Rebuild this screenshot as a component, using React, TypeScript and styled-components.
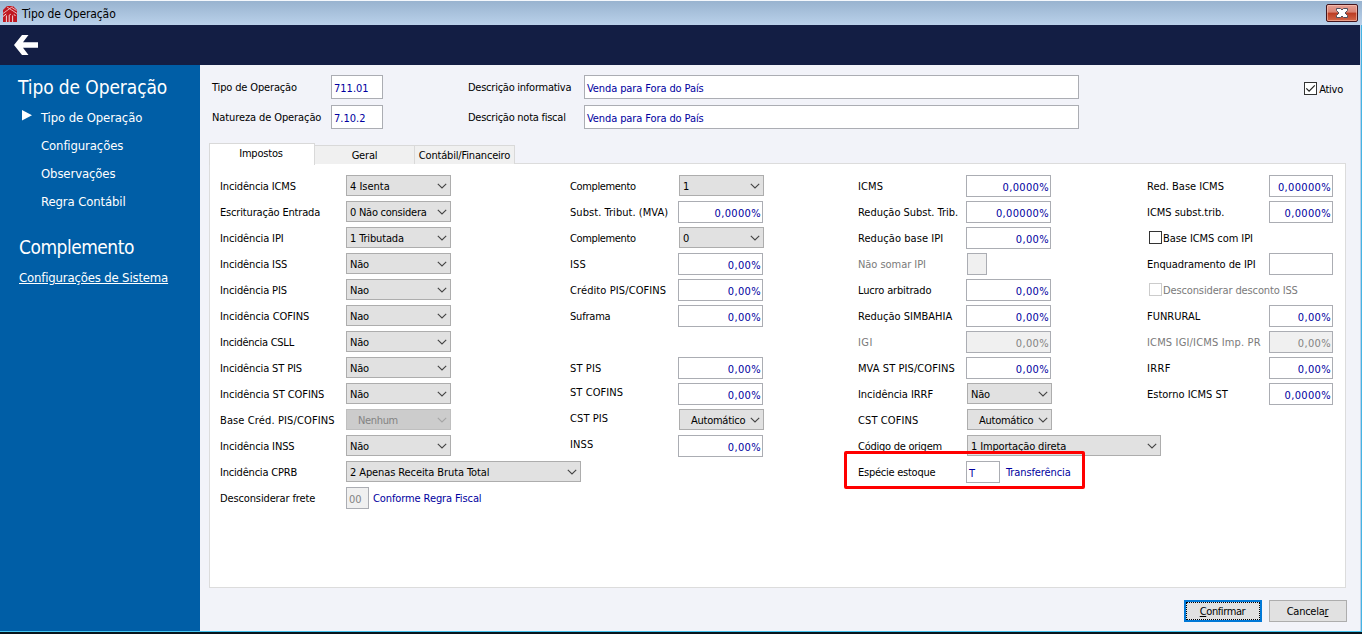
import React from 'react';
import styled, { createGlobalStyle, css } from 'styled-components';

type FieldType = {
  label?: string;
  ls?: number;
  kind?: 'select' | 'input' | 'check' | 'empty';
  value?: string;
  vls?: number;
  width?: number;
  disabled?: boolean;
  labelDisabled?: boolean;
  left?: boolean;
  indent?: number;
  up?: number;
  note?: string;
  mark?: boolean;
};

const column1: FieldType[] = [
  { label: 'Incidência ICMS', kind: 'select', value: '4 Isenta', ls: -0.15, vls: 0 },
  { label: 'Escrituração Entrada', kind: 'select', value: '0 Não considera', ls: -0.17 },
  { label: 'Incidência IPI', kind: 'select', value: '1 Tributada', ls: -0.12, vls: -0.15 },
  { label: 'Incidência ISS', kind: 'select', value: 'Não', ls: -0.12 },
  { label: 'Incidência PIS', kind: 'select', value: 'Nao', ls: -0.12 },
  { label: 'Incidência COFINS', kind: 'select', value: 'Nao', ls: -0.07 },
  { label: 'Incidência CSLL', kind: 'select', value: 'Não' },
  { label: 'Incidência ST PIS', kind: 'select', value: 'Não', ls: -0.12 },
  { label: 'Incidência ST COFINS', kind: 'select', value: 'Não', ls: -0.08 },
  { label: 'Base Créd. PIS/COFINS', kind: 'select', value: 'Nenhum', ls: 0.12, vls: -0.35, disabled: true, indent: 8 },
  { label: 'Incidência INSS', kind: 'select', value: 'Não', ls: -0.12 },
  { label: 'Incidência CPRB', kind: 'select', value: '2 Apenas Receita Bruta Total', ls: -0.2, vls: -0.1, width: 235 },
  { label: 'Desconsiderar frete', kind: 'input', value: '00', ls: -0.13, width: 23, disabled: true, left: true, note: 'Conforme Regra Fiscal' },
];

const column2: FieldType[] = [
  { label: 'Complemento', kind: 'select', value: '1', ls: -0.37 },
  { label: 'Subst. Tribut. (MVA)', kind: 'input', value: '0,0000%', ls: 0.05 },
  { label: 'Complemento', kind: 'select', value: '0', ls: -0.37 },
  { label: 'ISS', kind: 'input', value: '0,00%', ls: 0.1 },
  { label: 'Crédito PIS/COFINS', kind: 'input', value: '0,00%', ls: 0.1 },
  { label: 'Suframa', kind: 'input', value: '0,00%', ls: -0.2 },
  { kind: 'empty' },
  { label: 'ST PIS', kind: 'input', value: '0,00%', ls: 0.12 },
  { label: 'ST COFINS', kind: 'input', value: '0,00%', ls: 0.08, up: 2 },
  { label: 'CST PIS', kind: 'select', value: 'Automático', ls: 0.1, up: 2, indent: 8 },
  { label: 'INSS', kind: 'input', value: '0,00%', ls: 0.1, up: 2 },
];

const column3: FieldType[] = [
  { label: 'ICMS', kind: 'input', value: '0,0000%', ls: 0.1 },
  { label: 'Redução Subst. Trib.', kind: 'input', value: '0,00000%', ls: -0.02 },
  { label: 'Redução base IPI', kind: 'input', value: '0,00%', ls: 0.06 },
  { label: 'Não somar IPI', kind: 'input', value: '', ls: -0.05, width: 20, disabled: true, labelDisabled: true, indent: 1 },
  { label: 'Lucro arbitrado', kind: 'input', value: '0,00%', ls: -0.15 },
  { label: 'Redução SIMBAHIA', kind: 'input', value: '0,00%', ls: 0 },
  { label: 'IGI', kind: 'input', value: '0,00%', ls: 0.4, disabled: true, labelDisabled: true },
  { label: 'MVA ST PIS/COFINS', kind: 'input', value: '0,00%', ls: 0.08 },
  { label: 'Incidência IRRF', kind: 'select', value: 'Não', ls: -0.05 },
  { label: 'CST COFINS', kind: 'select', value: 'Automático', ls: 0.1, indent: 8 },
  { label: 'Código de origem', kind: 'select', value: '1 Importação direta', vls: -0.15, width: 194 },
  { label: 'Espécie estoque', kind: 'input', value: 'T', width: 34, left: true, note: 'Transferência', mark: true },
];

const column4: FieldType[] = [
  { label: 'Red. Base ICMS', kind: 'input', value: '0,00000%', ls: 0 },
  { label: 'ICMS subst.trib.', kind: 'input', value: '0,0000%', ls: -0.03 },
  { label: 'Base ICMS com IPI', kind: 'check', ls: -0.07 },
  { label: 'Enquadramento de IPI', kind: 'input', value: '', ls: -0.07 },
  { label: 'Desconsiderar desconto ISS', kind: 'check', ls: -0.13, disabled: true },
  { label: 'FUNRURAL', kind: 'input', value: '0,00%', ls: 0 },
  { label: 'ICMS IGI/ICMS Imp. PR', kind: 'input', value: '0,00%', ls: 0.16, disabled: true, labelDisabled: true },
  { label: 'IRRF', kind: 'input', value: '0,00%', ls: 0.35 },
  { label: 'Estorno ICMS ST', kind: 'input', value: '0,0000%', ls: 0 },
];

const Chevron = () => (
  <ChevronIcon width="10" height="6" viewBox="0 0 10 6">
    <path d="M0.8 0.8 L5 5 L9.2 0.8" fill="none" stroke="currentColor" strokeWidth="1.1" />
  </ChevronIcon>
);

const CheckBox = ({ checked, disabled }: { checked?: boolean; disabled?: boolean }) => (
  <CheckSquare $disabled={disabled}>
    {checked && (
      <svg width="11" height="11" viewBox="0 0 11 11">
        <path d="M1.3 5.4 L4.1 8.2 L9.8 2.4" fill="none" stroke="#222" strokeWidth="1.2" />
      </svg>
    )}
  </CheckSquare>
);

const Field = ({ item, inset }: { item: FieldType; inset: number }) => {
  if (item.kind === 'empty') return <Row />;
  if (item.kind === 'check') {
    return (
      <Row>
        <CheckLabel $disabled={item.disabled}>
          <CheckBox disabled={item.disabled} />
          <Text $ls={item.ls}>{item.label}</Text>
        </CheckLabel>
      </Row>
    );
  }
  return (
    <Row>
      <Label $up={item.up} $ls={item.ls} $disabled={item.labelDisabled}>
        {item.label}
      </Label>
      {item.kind === 'select' ? (
        <Select $width={item.width} $disabled={item.disabled} $inset={inset}>
          <SelectValue $indent={item.indent} $ls={item.vls}>{item.value}</SelectValue>
          <Chevron />
        </Select>
      ) : (
        <Input $width={item.width} $disabled={item.disabled} $left={item.left} $inset={item.indent}>
          {item.value}
        </Input>
      )}
      {item.note && <Note $wide={item.mark}>{item.note}</Note>}
      {item.mark && <Highlight />}
    </Row>
  );
};

export default function App() {
  return (
    <>
      <GlobalStyle />
      <Window>
        <TitleBar>
          <svg width="14" height="16" viewBox="0 0 14 16">
            <path d="M0 4 L4 0 H10 L14 4 V16 H0 Z" fill="#c01820" />
            <path d="M0 7.5 L9.5 0.5 M4 1 L14 7.5 M9 1.5 L13.5 4.5" fill="none" stroke="#ecc6ca" strokeWidth="0.9" />
            <path d="M0 10.5 L3.2 8 M3.4 16 V9.5 M6.2 16 V9.2 L7.8 8.2 M9.6 16 V9.5 M10.8 8.6 L12.6 9.6" fill="none" stroke="#f0d3d6" strokeWidth="1" />
          </svg>
          <WindowTitle>Tipo de Operação</WindowTitle>
          <CloseButton>
            <svg width="12" height="10" viewBox="0 0 12 10">
              <path d="M0.5 0.5 H4.5 L6 2 L7.5 0.5 H11.5 V2.5 L9 5 L11.5 7.5 V9.5 H7.5 L6 8 L4.5 9.5 H0.5 V7.5 L3 5 L0.5 2.5 Z" fill="#fff" stroke="#50525f" strokeWidth="1" />
            </svg>
          </CloseButton>
        </TitleBar>
        <Content>
          <NavBar>
            <svg width="24" height="20" viewBox="0 0 24 20">
              <path d="M0 10 L8 0 H14.5 L9 7.2 H24 V12.8 H9 L14.5 20 H8 Z" fill="#fff" />
            </svg>
          </NavBar>
          <Main>
            <SideBar>
              <SideTitle>Tipo de Operação</SideTitle>
              <SideItem>
                <Marker width="11" height="11" viewBox="0 0 11 11">
                  <path d="M1 0 L11 5.3 L1 10.6 Z" fill="#fff" />
                </Marker>
                Tipo de Operação
              </SideItem>
              <SideItem>Configurações</SideItem>
              <SideItem>Observações</SideItem>
              <SideItem>Regra Contábil</SideItem>
              <SideTitle $second>Complemento</SideTitle>
              <SideLink>Configurações de Sistema</SideLink>
            </SideBar>
            <Page>
              <Header>
                <HeaderGrid>
                  <HeaderLabel $ls={-0.15}>Tipo de Operação</HeaderLabel>
                  <HeaderInput $code>711.01</HeaderInput>
                  <HeaderLabel>Descrição informativa</HeaderLabel>
                  <HeaderInput>Venda para Fora do País</HeaderInput>
                  <HeaderLabel $ls={-0.1}>Natureza de Operação</HeaderLabel>
                  <HeaderInput $code>7.10.2</HeaderInput>
                  <HeaderLabel>Descrição nota fiscal</HeaderLabel>
                  <HeaderInput>Venda para Fora do País</HeaderInput>
                </HeaderGrid>
                <Active>
                  <CheckBox checked />
                  <Text>Ativo</Text>
                </Active>
              </Header>
              <Tabs>
                <Tab $active>Impostos</Tab>
                <Tab>Geral</Tab>
                <Tab>Contábil/Financeiro</Tab>
              </Tabs>
              <Panel>
                <Column $width={350} $label={126} $control={105}>
                  {column1.map((item, i) => <Field key={i} item={item} inset={0} />)}
                </Column>
                <Column $width={288} $label={108} $control={85}>
                  {column2.map((item, i) => <Field key={i} item={item} inset={1} />)}
                </Column>
                <Column $width={289} $label={108} $control={85}>
                  {column3.map((item, i) => <Field key={i} item={item} inset={1} />)}
                </Column>
                <Column $width={186} $label={122} $control={64}>
                  {column4.map((item, i) => <Field key={i} item={item} inset={0} />)}
                </Column>
              </Panel>
              <Footer>
                <Button $primary><u>C</u>onfirmar</Button>
                <Button>Cancela<u>r</u></Button>
              </Footer>
            </Page>
          </Main>
        </Content>
      </Window>
    </>
  );
}

const GlobalStyle = createGlobalStyle`
  * {
    box-sizing: border-box;
  }

  body {
    margin: 0;
    overflow: hidden;
    font-family: 'DejaVu Sans Condensed', 'DejaVu Sans', sans-serif;
    font-stretch: condensed;
    font-size: 11px;
    line-height: 14px;
    letter-spacing: -0.25px;
    color: #000;
    white-space: nowrap;
  }
`;

const Window = styled.div`
  display: flex;
  flex-direction: column;
  width: 1362px;
  height: 634px;
  border-bottom: 2px solid #06151c;
  background: #f2f3f9;
`;

const TitleBar = styled.header`
  display: flex;
  align-items: center;
  height: 25px;
  padding: 2px 4px 0 3px;
  border-top: 1px solid #f4f8fc;
  background: linear-gradient(#98b3cf, #bad1ea);
`;

const WindowTitle = styled.h1`
  flex: 1;
  margin: 0 0 0 5px;
  font-size: 12px;
  font-weight: normal;
  letter-spacing: -0.1px;
`;

const CloseButton = styled.div`
  display: flex;
  align-items: center;
  justify-content: center;
  width: 32px;
  height: 18px;
  margin-top: -2px;
  padding-right: 1px;
  border: 1px solid #43141c;
  border-radius: 2px;
  box-shadow: inset 0 0 0 1px rgba(255, 205, 190, 0.55);
  background: linear-gradient(#e5a093 0%, #d98273 45%, #bb3b22 50%, #d3674a 100%);
`;

const Content = styled.div`
  display: flex;
  flex-direction: column;
  flex: 1;
  border-right: 1px solid #45b4e4;
  border-bottom: 1px solid #45c4ee;
  box-shadow: inset -1px 0 #b9d1ea;
`;

const NavBar = styled.nav`
  display: flex;
  align-items: center;
  height: 40px;
  margin-right: 1px;
  padding-left: 14px;
  background: #131e44;
`;

const Main = styled.div`
  display: flex;
  flex: 1;
`;

const SideBar = styled.aside`
  width: 200px;
  padding-top: 8px;
  background: #005ea6;
  color: #fff;
`;

const SideTitle = styled.h2<{ $second?: boolean }>`
  margin: 0;
  padding: ${(props) => (props.$second ? '20px 0 0 19px' : '0 0 0 18px')};
  font-size: 19px;
  font-weight: normal;
  line-height: 28px;
  letter-spacing: ${(props) => (props.$second ? -0.5 : -0.1)}px;
`;

const SideItem = styled.div`
  position: relative;
  height: 28px;
  padding-left: 41px;
  font-size: 13px;
  line-height: 34px;
  letter-spacing: -0.12px;
`;

const Marker = styled.svg`
  position: absolute;
  left: 21px;
  top: 9px;
`;

const SideLink = styled.div`
  padding-left: 19px;
  font-size: 13px;
  line-height: 34px;
  letter-spacing: -0.16px;
  text-decoration: underline;
`;

const Page = styled.main`
  flex: 1;
  padding: 10px 14px 0 9px;
`;

const Header = styled.div`
  display: flex;
  justify-content: space-between;
  height: 68px;
  padding-left: 3px;
`;

const HeaderGrid = styled.div`
  display: grid;
  grid-template-columns: 119px 137px 116px 495px;
  grid-auto-rows: 24px;
  row-gap: 6px;
`;

const HeaderLabel = styled.label<{ $ls?: number }>`
  line-height: 26px;
  letter-spacing: ${(props) => props.$ls ?? -0.25}px;
`;

const valueBox = css`
  border: 1px solid #abadb3;
  background: #fff;
  color: #0000a0;
`;

const HeaderInput = styled.div<{ $code?: boolean }>`
  ${valueBox}
  width: ${(props) => (props.$code ? '52px' : '495px')};
  padding-left: 2px;
  line-height: 26px;
  letter-spacing: ${(props) => (props.$code ? '0px' : '-0.1px')};
`;

const Active = styled.div`
  display: flex;
  gap: 2px;
  height: 14px;
  margin: 7px 4px 0 0;
  line-height: 15px;
`;

const Text = styled.span<{ $ls?: number }>`
  letter-spacing: ${(props) => props.$ls ?? -0.25}px;
`;

const CheckSquare = styled.span<{ $disabled?: boolean }>`
  display: flex;
  width: 13px;
  height: 13px;
  border: 1px solid ${(props) => (props.$disabled ? '#ccc' : '#333')};
  background: #fff;
`;

const Tabs = styled.div`
  display: flex;
  align-items: flex-end;
  height: 21px;
`;

const Tab = styled.div<{ $active?: boolean }>`
  width: 100px;
  height: 19px;
  border: 1px solid #d9d9d9;
  border-width: 1px 1px 0 0;
  background: #f0f0f0;
  line-height: 20px;
  letter-spacing: -0.18px;
  text-align: center;

  ${(props) =>
    props.$active &&
    css`
      position: relative;
      width: 106px;
      height: 22px;
      margin-bottom: -1px;
      padding-right: 2px;
      border-left-width: 1px;
      background: #fff;
      line-height: 19px;
    `}
`;

const Panel = styled.section`
  display: flex;
  width: 1137px;
  height: 425px;
  margin-top: -1px;
  padding: 11px 0 0 10px;
  border: 1px solid #dcdcdc;
  background: #fff;
`;

const Row = styled.div`
  position: relative;
  display: flex;
  height: 26px;
`;

const Label = styled.label<{ $up?: number; $ls?: number; $disabled?: boolean }>`
  flex-shrink: 0;
  width: var(--label-width);
  height: 22px;
  margin-top: ${(props) => -(props.$up ?? 0)}px;
  color: ${(props) => (props.$disabled ? '#7a7a7a' : '#000')};
  line-height: 24px;
  letter-spacing: ${(props) => props.$ls ?? -0.25}px;
`;

const Select = styled.div<{ $width?: number; $disabled?: boolean; $inset: number }>`
  display: flex;
  flex-shrink: 0;
  width: ${(props) => (props.$width ? `${props.$width}px` : 'var(--control-width)')};
  height: 21px;
  margin-left: ${(props) => props.$inset}px;
  padding: 0 3px;
  border: 1px solid ${(props) => (props.$disabled ? '#bfbfbf' : '#adadad')};
  background: ${(props) => (props.$disabled ? '#ccc' : '#e1e1e1')};
  color: ${(props) => (props.$disabled ? '#838383' : '#000')};
  line-height: 21px;

  svg {
    color: ${(props) => (props.$disabled ? '#a5a5a5' : '#444')};
  }
`;

const SelectValue = styled.span<{ $indent?: number; $ls?: number }>`
  flex: 1;
  overflow: hidden;
  margin-right: 2px;
  padding-left: ${(props) => props.$indent ?? 0}px;
  letter-spacing: ${(props) => props.$ls ?? -0.25}px;
`;

const ChevronIcon = styled.svg`
  flex-shrink: 0;
  margin-top: 7px;
`;

const Input = styled.div<{ $width?: number; $disabled?: boolean; $left?: boolean; $inset?: number }>`
  ${valueBox}
  flex-shrink: 0;
  width: ${(props) => (props.$width ? `${props.$width}px` : 'var(--control-width)')};
  height: 22px;
  margin-left: ${(props) => props.$inset ?? 0}px;
  padding: 0 1px 0 2px;
  line-height: 23px;
  letter-spacing: ${(props) => (props.$left ? 0 : 0.35)}px;
  text-align: ${(props) => (props.$left ? 'left' : 'right')};
  ${(props) => props.$disabled && 'background: #f0f0f0; color: #838383;'}
`;

const Column = styled.div<{ $width: number; $label: number; $control: number }>`
  --label-width: ${(props) => props.$label}px;
  --control-width: ${(props) => props.$control}px;
  flex-shrink: 0;
  width: ${(props) => props.$width}px;
`;

const CheckLabel = styled.div<{ $disabled?: boolean }>`
  display: flex;
  gap: 1px;
  padding: 4px 0 0 2px;
  color: ${(props) => (props.$disabled ? '#7a7a7a' : '#000')};
  line-height: 16px;
`;

const Note = styled.span<{ $wide?: boolean }>`
  padding-left: ${(props) => (props.$wide ? 6 : 4)}px;
  color: #0000a0;
  line-height: 24px;
  letter-spacing: -0.1px;
`;

const Highlight = styled.div`
  position: absolute;
  left: -14px;
  top: -10px;
  width: 241px;
  height: 38px;
  border: 3px solid #f00;
  border-radius: 2px;
`;

const Footer = styled.footer`
  display: flex;
  justify-content: flex-end;
  gap: 7px;
  padding-top: 12px;
`;

const Button = styled.div<{ $primary?: boolean }>`
  width: 78px;
  height: 22px;
  padding-right: 1px;
  border: 1px solid #adadad;
  background: #e1e1e1;
  line-height: 21px;
  text-align: center;

  ${(props) =>
    props.$primary &&
    css`
      border: 2px solid #0078d7;
      outline: 1px dotted #000;
      outline-offset: -3px;
      line-height: 19px;
      letter-spacing: -0.4px;
    `}
`;
